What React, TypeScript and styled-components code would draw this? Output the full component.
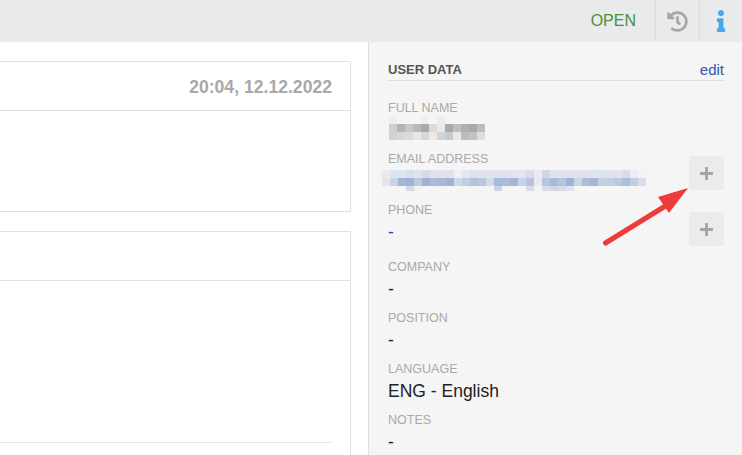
import React from "react";
import styled, { createGlobalStyle } from "styled-components";
import { FaHistory, FaInfo, FaPlus } from "react-icons/fa";

const Global = createGlobalStyle`
  html, body { margin: 0; padding: 0; height: 100%; overflow: hidden; background: #fff; }
  #root { height: 100%; }
  * { box-sizing: border-box; }
`;
const Page = styled.div`
  position: relative; width: 742px; height: 455px; overflow: hidden;
  display: flex; flex-direction: column;
  font-family: "Liberation Sans", Arial, sans-serif; background: #fff;
`;
const TopBar = styled.header`
  height: 42px; flex: none; background: #e9eaec; display: flex; justify-content: flex-end; align-items: stretch;
`;
const Status = styled.div`
  display: flex; align-items: center; padding-right: 19px; font-size: 16px; color: #4a8f3a;
`;
const BarButton = styled.div<{ $w: number; $color: string }>`
  width: ${p => p.$w}px; border-left: 1px solid #dcdddf; display: flex; align-items: center; justify-content: center;
  color: ${p => p.$color};
`;
const Body = styled.div`
  flex: 1; min-height: 0; display: flex;
`;
const Main = styled.main`
  width: 368px; flex: none; padding: 19px 17px 0 0; display: flex; flex-direction: column; gap: 19px; overflow: hidden;
`;
const Card = styled.section<{ $h: number }>`
  flex: none; height: ${p => p.$h}px; margin-left: -2px; border: 1px solid #e0e0e0; display: flex; flex-direction: column;
`;
const CardHead = styled.div`
  height: 49px; flex: none; border-bottom: 1px solid #e0e0e0; display: flex; align-items: center; justify-content: flex-end;
  padding: 2px 18px 0 0; font-size: 17.6px; font-weight: 700; color: #a8a8a8;
`;
const CardBody = styled.div`
  flex: 1; padding: 161px 19px 0 0;
`;
const InnerRule = styled.div`
  height: 1px; background: #e4e4e4;
`;
const Side = styled.aside`
  flex: 1; background: #f5f5f5; border-left: 1px solid #dedede; padding: 19px 18px 0 19px; display: flex; flex-direction: column;
`;
const SideHead = styled.div`
  height: 20px; flex: none; border-bottom: 1px solid #dedede; display: flex; justify-content: space-between; align-items: center;
  margin-bottom: 20px; padding-bottom: 2px;
`;
const SideTitle = styled.h2`
  margin: 0; font-size: 13px; font-weight: 700; color: #555; text-transform: uppercase;
`;
const EditLink = styled.a`
  font-size: 15px; color: #2f57a8; line-height: 16px;
`;
const Row = styled.div<{ $extra?: number }>`
  flex: none; display: flex; justify-content: space-between; align-items: flex-end;
  padding-bottom: ${p => 10 + (p.$extra ?? 0)}px;
`;
const Field = styled.div`
  min-width: 0;
`;
const Label = styled.div`
  font-size: 12.5px; line-height: 14px; height: 14px; color: #a9a9a9; text-transform: uppercase; margin-bottom: 3px;
`;
const Value = styled.div<{ $link?: boolean }>`
  display: flow-root;
  font-size: 17.5px; line-height: 24px; height: 24px; color: ${p => (p.$link ? "#1f4fb0" : "#222")};
`;
const Mosaic = styled.svg<{ $shiftX: number; $shiftY: number }>`
  display: block; margin: ${p => p.$shiftY}px 0 0 ${p => p.$shiftX}px;
`;
const AddButton = styled.button<{ $bottom: number }>`
  width: 35px; height: 34px; border: 0; padding: 0; border-radius: 2px; background: #ebebed; color: #a3a3a3;
  display: flex; align-items: center; justify-content: center; margin-bottom: ${p => p.$bottom}px; flex: none;
`;
const ArrowLayer = styled.svg`
  position: absolute; left: 595px; top: 180px; pointer-events: none;
`;

const NAME = [
  "efefef,,,,efefef,,f0ece8,f3f3f3,,,,,",
  "cfcfcf,b5b3ae,c6c6c6,b9bab6,a9a9ae,e2d8d2,e4eaee,aba8a7,bcc1bc,b0b0b2,a9a8a6,bdbdbd",
  "d2d2d2,d6d6d6,dbdbdb,e6e6e6,d8d8dc,efe9e4,d0d4d6,cdc8c8,e6eae8,bdbcbc,c2c2c2,dcdcdc",
].map(r => r.split(","));
const EMAIL = [
  "ece8ee,dbe5f0,dfe4ee,d9dfea,e0e3ec,d5d9e8,e0e3ec,dfe2ec,dfe3ec,eef0f3,e2e6ef,dfe2ec,dfe3ec,e0e3ec,dfe3ec,dfe2ec,e2e5ee,e3e6ef,d8dce9,e8eaef,cfd6e8,dfe2ec,e0e3ec,dfe2ec,dfe3ec,e0e3ec,dde6ee,dfe3ec,e0e3ec,e0e3ec,d8dcea,e8edf4,f0f2f5",
  "e8e3ea,c5d6e8,a5b4d6,9fb3d6,c1c8dd,9fb2d6,adb9d8,a8b6d8,a3b1d6,cdd8e8,c3cde0,b3c3de,b9c7e0,d6d9e6,a5b9dc,adbbdb,a6b3d6,c6d6e6,b7c4dc,e8eaf0,b9c4de,a9b9da,b7c4dc,9fb3d8,c9d6e6,b0bcdc,a6b4d8,bfd2e4,c3d0e2,b7cadf,aebfdc,c3cce0,d6dcea",
  ",,,d5d9e8,f0f1f4,,,,,,,,,,cdd3e6,,,,d8dcea,,d8dcea,d0d6e8,d8dcea,dfe2ec,,,,,,,,,",
].map(r => r.split(","));

function Pixels({ cells, cell, height, x, y }: { cells: string[][]; cell: number; height: number; x: number; y: number }) {
  const w = cells[0].length * cell;
  return (
    <Mosaic $shiftX={x} $shiftY={y} width={w} height={height} viewBox={`0 0 ${w} ${height}`} shapeRendering="crispEdges">
      {cells.flatMap((row, r) =>
        row.map((c, i) => (c ? <rect key={`${i}-${r}`} x={i * cell} y={r * cell} width={cell} height={cell} fill={`#${c}`} /> : null))
      )}
    </Mosaic>
  );
}

export default function App() {
  return (
    <Page>
      <Global />
      <TopBar>
        <Status>OPEN</Status>
        <BarButton $w={44} $color="#a6a6a6"><FaHistory size={21} /></BarButton>
        <BarButton $w={43} $color="#4aa7ea"><FaInfo size={22} /></BarButton>
      </TopBar>
      <Body>
        <Main>
          <Card $h={151}>
            <CardHead>20:04, 12.12.2022</CardHead>
          </Card>
          <Card $h={260}>
            <CardHead />
            <CardBody><InnerRule /></CardBody>
          </Card>
        </Main>
        <Side>
          <SideHead>
            <SideTitle>User data</SideTitle>
            <EditLink>edit</EditLink>
          </SideHead>
          <Row>
            <Field>
              <Label>Full name</Label>
              <Value><Pixels cells={NAME} cell={8} height={24} x={1} y={-2} /></Value>
            </Field>
          </Row>
          <Row>
            <Field>
              <Label>Email address</Label>
              <Value><Pixels cells={EMAIL} cell={8} height={21} x={-6} y={1} /></Value>
            </Field>
            <AddButton $bottom={3}><FaPlus size={15} /></AddButton>
          </Row>
          <Row $extra={6}>
            <Field>
              <Label>Phone</Label>
              <Value $link>-</Value>
            </Field>
            <AddButton $bottom={-2}><FaPlus size={15} /></AddButton>
          </Row>
          <Row>
            <Field><Label>Company</Label><Value>-</Value></Field>
          </Row>
          <Row>
            <Field><Label>Position</Label><Value>-</Value></Field>
          </Row>
          <Row>
            <Field><Label>Language</Label><Value>ENG - English</Value></Field>
          </Row>
          <Row>
            <Field><Label>Notes</Label><Value>-</Value></Field>
          </Row>
        </Side>
      </Body>
      <ArrowLayer width={100} height={70} viewBox="0 0 100 70">
        <path d="M10.5 63 L72 25" stroke="#ee3b3b" strokeWidth="5" strokeLinecap="round" fill="none" />
        <path d="M93 8 L63 17 L74 33 Z" fill="#ee3b3b" />
      </ArrowLayer>
    </Page>
  );
}
